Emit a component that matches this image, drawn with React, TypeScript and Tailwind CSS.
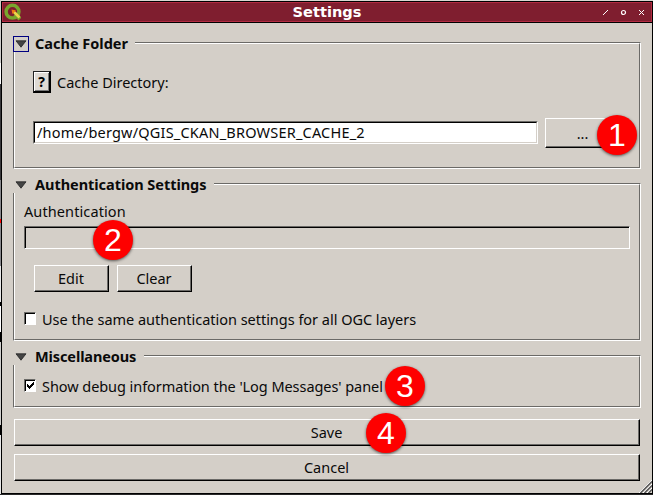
import React from 'react';

const UI = "font-['Noto_Sans',sans-serif]";

function Text({ children, className = '-translate-y-px' }: { children: React.ReactNode; className?: string }) {
  return <span className={`block text-[14.5px] leading-5 whitespace-pre text-[#0a0a0a] ${className}`}>{children}</span>;
}

function Badge({ n, className }: { n: number; className: string }) {
  return (
    <div
      className={`absolute z-10 flex size-10 items-center justify-center rounded-full bg-[#fe0000] font-['Liberation_Sans',sans-serif] text-[32px] leading-none text-white shadow-[0_1px_3px_rgba(0,0,0,0.6)] ${className}`}
    >
      {n}
    </div>
  );
}

function Group({
  title,
  titleWidth,
  titleSpacing = '',
  focused = false,
  className,
  children,
}: {
  title: string;
  titleWidth: string;
  titleSpacing?: string;
  focused?: boolean;
  className: string;
  children: React.ReactNode;
}) {
  return (
    <section className={`relative border border-t-[#6b6a67] border-l-[#6b6a67] border-r-white border-b-white ${className}`}>
      <div className="h-full border border-t-white border-l-white border-r-[#6b6a67] border-b-[#6b6a67]">{children}</div>
      <header className={`absolute -top-2 -left-px flex h-[17px] items-center bg-[#d4cfc8] ${titleWidth}`}>
        <span className={`flex size-4 items-center justify-center border ${focused ? 'border-[#000080]' : 'border-transparent'}`}>
          <svg width="12" height="8" viewBox="0 0 12 8">
            <path d="M1 .8h10L6 7.2z" fill="#444" stroke="#222" strokeWidth=".8" />
          </svg>
        </span>
        <Text className={`ml-1.5 -translate-y-px font-bold ${titleSpacing}`}>{title}</Text>
      </header>
    </section>
  );
}

function Button({ children, className = '' }: { children: React.ReactNode; className?: string }) {
  return (
    <button className={`flex border border-t-white border-l-white border-r-black border-b-black ${className}`}>
      <span className="flex h-full flex-1 items-center justify-center border-r border-b border-[#6b6a67]">{children}</span>
    </button>
  );
}

function Checkbox({ checked = false }: { checked?: boolean }) {
  return (
    <span className="block h-[13px] w-3 border border-t-[#6b6a67] border-l-[#6b6a67] border-r-white border-b-white">
      <span className="block h-full border-t border-l border-black bg-white">
        {checked && (
          <svg width="9" height="9" viewBox="0 0 9 9" shapeRendering="crispEdges">
            <path d="M1 3v3h1v1h1v1h1V7h1V6h1V5h1V4h1V1H7v1H6v1H5v1H4v1H3V4H2V3z" fill="#000" />
          </svg>
        )}
      </span>
    </span>
  );
}

function Logo() {
  return (
    <svg width="18" height="18" viewBox="0 0 18 18">
      <circle cx="9.5" cy="8.7" r="6.4" fill="none" stroke="#79a52c" strokeWidth="3.5" />
      <path d="M12 11l5 5" stroke="#79a52c" strokeWidth="4" />
      <path d="M10 8l6.5 6.5" stroke="#edd54b" strokeWidth="2.6" />
      <path d="M8.5 6.5l4.5 1-3.5 3.5z" fill="#ee7913" />
    </svg>
  );
}

export default function App() {
  return (
    <div className={`relative h-[495px] w-[653px] overflow-hidden bg-[#d9d7d2] pt-px pl-px ${UI}`}>
      <div className="absolute top-0 left-0 flex h-full w-px flex-col">
        <div className="h-[63px] bg-[#cfcdca]" />
        <div className="h-[21px] bg-white" />
        <div className="h-24 bg-[#38383b]" />
        <div className="h-[39px] bg-[#88888c]" />
        <div className="h-1 bg-[#f00]" />
        <div className="h-[43px] bg-[#88888c]" />
        <div className="h-9 bg-[#e8e8e8]" />
        <div className="h-1 bg-black" />
        <div className="h-[26px] bg-white" />
        <div className="h-2.5 bg-black" />
        <div className="h-[83px] bg-[#d0cfcd]" />
        <div className="h-2.5 bg-black" />
        <div className="flex-1 bg-[#e8e8e8]" />
      </div>
      <div className="absolute bottom-0 left-0 h-px w-full bg-[#292929]" />
      <main className="relative flex h-[493px] flex-col border border-black bg-[#d4cfc8]">
        <div className="flex h-5 shrink-0 items-center border border-[#b32c42] bg-[#7f1e2f]">
          <div className="w-[90px]"><Logo /></div>
          <h1 className="flex-1 text-center font-['DejaVu_Sans',sans-serif] text-[14.6px] leading-4 font-bold text-white">Settings</h1>
          <div className="flex w-[90px] justify-end pr-1.5">
            <svg width="43" height="7" viewBox="0 0 43 7" stroke="#fff" fill="none">
              <path d="M1 6l5-5" />
              <circle cx="21.5" cy="3.5" r="2" strokeWidth="1.2" />
              <path d="M37 1l5 5M42 1l-5 5" />
            </svg>
          </div>
        </div>
        <div className="h-px shrink-0 bg-black" />

        <div className="flex flex-1 flex-col pt-[19px] pl-[11px]">
          <Group title="Cache Folder" titleWidth="w-[122px]" focused className="h-[127px] w-[628px]">
            <div className="pt-[27px] pl-[18px]">
              <div className="flex h-[22px] items-center">
                <div className="flex h-[22px] w-[18px] items-center justify-center border border-r-2 border-b-2 border-t-[#222] border-l-[#222] border-r-black border-b-black bg-[#dedad4] text-[14px] font-bold shadow-[inset_1px_1px_white,inset_-1px_-1px_#777]">?</div>
                <Text className="ml-1.5">Cache Directory:</Text>
              </div>
              <div className="flex pt-[25px]">
                <div className="mt-[3px] h-[23px] w-[505px] border border-t-[#6b6a67] border-l-[#6b6a67] border-r-white border-b-white">
                  <div className="flex h-full items-center border border-t-black border-l-black border-r-[#d4cfc8] border-b-[#d4cfc8] bg-white pl-0.5">
                    <Text className="-translate-y-px tracking-[0.2px]">/home/bergw/QGIS_CKAN_BROWSER_CACHE_2</Text>
                  </div>
                </div>
                <Button className="ml-[7px] h-[30px] w-[76px]"><Text className="">...</Text></Button>
              </div>
            </div>
          </Group>

          <Group title="Authentication Settings" titleWidth="w-[201px]" titleSpacing="tracking-[-0.04px]" className="mt-3.5 h-[158px] w-[628px]">
            <div className="pt-[17px] pl-[9px]">
              <Text className="-translate-y-px tracking-[0.1px]">Authentication</Text>
              <div className="mt-1 h-[23px] w-[606px] border border-t-[#6b6a67] border-l-[#6b6a67] border-r-white border-b-white">
                <div className="h-full border-t border-l border-black" />
              </div>
              <div className="flex gap-2 pt-4 pl-2.5">
                <Button className="h-[27px] w-[75px]"><Text className="">Edit</Text></Button>
                <Button className="h-[27px] w-[75px]"><Text className="">Clear</Text></Button>
              </div>
              <div className="flex items-start pt-[20px]">
                <Checkbox />
                <Text className="-mt-[3px] ml-1.5 tracking-[-0.02px]">Use the same authentication settings for all OGC layers</Text>
              </div>
            </div>
          </Group>

          <Group title="Miscellaneous" titleWidth="w-[131px]" titleSpacing="tracking-[-0.1px]" className="mt-3.5 h-[53px] w-[628px]">
            <div className="flex items-start pt-[22px] pl-[9px]">
              <Checkbox checked />
              <Text className="-mt-[3px] ml-1.5 tracking-[-0.06px]">Show debug information the 'Log Messages' panel</Text>
            </div>
          </Group>

          <div className="flex flex-col gap-2 pt-[11px] pl-px">
            <Button className="h-[27px] w-[626px]"><Text className="">Save</Text></Button>
            <Button className="h-[27px] w-[626px]"><Text className="">Cancel</Text></Button>
          </div>
        </div>

        <svg className="absolute right-0 bottom-0" width="13" height="13" viewBox="0 0 13 13">
          <path d="M0 13L13 0M4 13l9-9M8 13l5-5" stroke="#fff" />
          <path d="M1.5 13L13 1.5M5.5 13L13 5.5M9.5 13L13 9.5" stroke="#555" strokeWidth="1.5" />
        </svg>
      </main>

      <Badge n={1} className="top-[115px] left-[597px]" />
      <Badge n={2} className="top-[220px] left-[93px]" />
      <Badge n={3} className="top-[366px] left-[385px]" />
      <Badge n={4} className="top-[413px] left-[366px]" />
    </div>
  );
}
